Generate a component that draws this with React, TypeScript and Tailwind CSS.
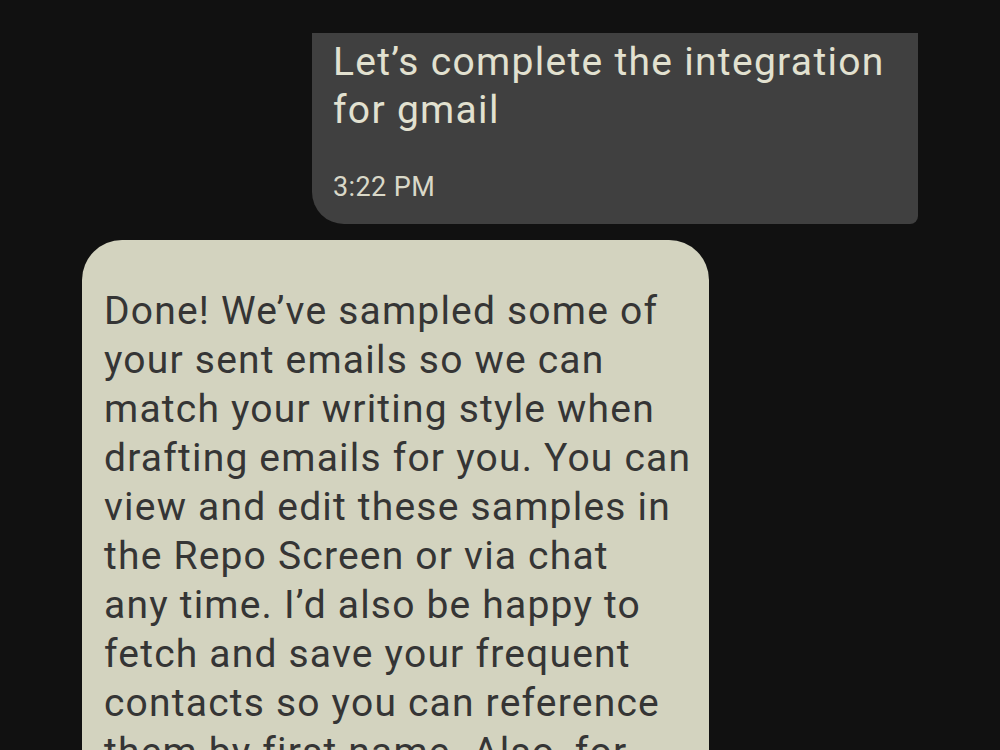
const reply = [
  'Done! We’ve sampled some of',
  'your sent emails so we can',
  'match your writing style when',
  'drafting emails for you. You can',
  'view and edit these samples in',
  'the Repo Screen or via chat',
  'any time. I’d also be happy to',
  'fetch and save your frequent',
  'contacts so you can reference',
  'them by first name. Also, for',
];

export default function App() {
  return (
    <div
      className="h-[750px] w-[1000px] overflow-hidden bg-[#111111]"
      style={{ fontFamily: 'Roboto, "Noto Sans", sans-serif' }}
    >
      <div className="flex flex-col pt-[33px]">
        {/* outgoing message */}
        <div className="ml-[312px] w-[606px] rounded-bl-[32px] rounded-br-[8px] bg-[#404040] pb-[21px] pl-[21px] pr-[20px] pt-[5px] text-[#e2e1d0]">
          <p className="whitespace-nowrap text-[39px] leading-[48px] tracking-[1.3px]">Let’s complete the integration</p>
          <p className="whitespace-nowrap text-[39px] leading-[48px] tracking-[1.3px]">for gmail</p>
          <p className="mt-[37px] text-[27px] leading-[32px] tracking-[0.4px] text-[#d9d8c8]">3:22 PM</p>
        </div>

        {/* incoming message */}
        <div className="ml-[82px] mt-[16px] w-[627px] rounded-t-[40px] bg-[#d3d3bf] pl-[22px] pr-[18px] pt-[47px] text-[#353535]">
          {reply.map((line) => (
            <p key={line} className="whitespace-nowrap text-[39px] leading-[49px] tracking-[1.2px]">
              {line}
            </p>
          ))}
        </div>
      </div>
    </div>
  );
}
